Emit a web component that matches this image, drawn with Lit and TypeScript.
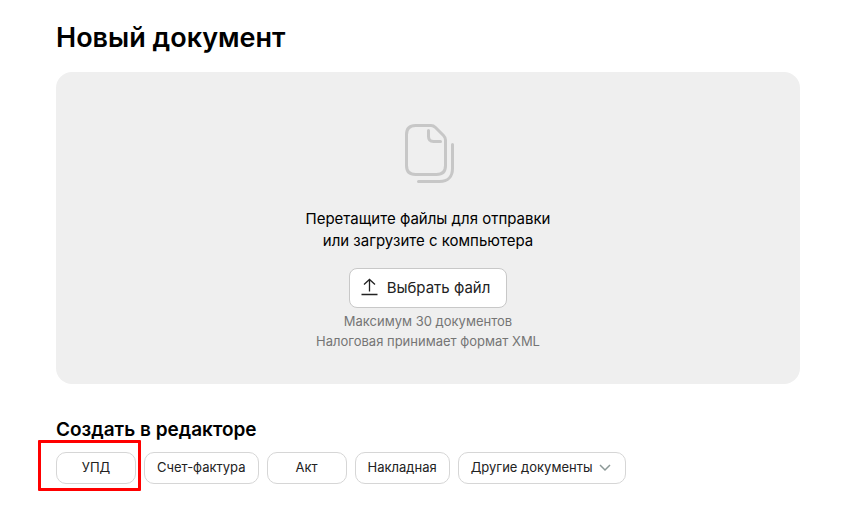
import { LitElement, html, css } from "lit";
import { customElement } from "lit/decorators.js";

@customElement("app-root")
export class AppRoot extends LitElement {
  static styles = css`
    :host {
      display: block;
      box-sizing: border-box;
      min-height: 100vh;
      padding: 20px 65px 28px 56px;
      background: #fff;
      color: #000;
      font-family: Inter, "Liberation Sans", sans-serif;
    }
    h1 {
      margin: 0 0 16px;
      font-size: 27px;
      line-height: 36px;
      font-weight: 600;
    }
    .drop {
      display: flex;
      flex-direction: column;
      align-items: center;
      padding: 52px 24px 33px;
      border-radius: 16px;
      background: #efefef;
      text-align: center;
    }
    .files {
      display: block;
      margin-bottom: 24px;
    }
    p {
      margin: 0;
    }
    .lead {
      font-size: 15px;
      line-height: 22px;
    }
    button {
      box-sizing: border-box;
      display: inline-flex;
      align-items: center;
      justify-content: center;
      border: 1px solid #d6d6d6;
      background: #fff;
      color: #222;
      font-family: inherit;
      white-space: nowrap;
      cursor: pointer;
    }
    .choose {
      gap: 9px;
      height: 40px;
      margin: 16px 0 3px;
      padding: 0 16px 2px 11px;
      border-color: #c8c8c8;
      border-radius: 8px;
      font-size: 15px;
    }
    .hint {
      color: #757575;
      font-size: 13px;
      line-height: 20px;
    }
    h2 {
      margin: 32px 0 8px;
      font-size: 19px;
      line-height: 28px;
      font-weight: 600;
    }
    .chips {
      display: flex;
      flex-wrap: wrap;
      gap: 8px;
    }
    .chip {
      height: 32px;
      min-width: 80px;
      padding: 0 12px 2px;
      gap: 4px;
      border-radius: 10px;
      font-size: 13px;
    }
    .marked {
      position: relative;
      display: flex;
    }
    .marked::after {
      content: "";
      position: absolute;
      inset: -12px -5px -7px -18px;
      border: 3px solid #f00;
      border-radius: 1px;
      pointer-events: none;
    }
  `;

  render() {
    return html`
      <main>
        <h1>Новый документ</h1>
        <section class="drop">
          <svg class="files" width="54" height="60" viewBox="-4 0 54 60" fill="none" stroke="#c7c7c7" stroke-width="3" stroke-linecap="round" stroke-linejoin="round" aria-hidden="true">
            <path d="M10.500 1.500H26Q28.500 1.500 30.500 3.500L38.500 11.500Q40.500 13.500 40.500 16V41.500Q40.500 50.500 31.500 50.500H10.500Q1.500 50.500 1.500 41.500V10.500Q1.500 1.500 10.500 1.500Z" />
            <path d="M23.500 6.500V12.500Q23.500 17.500 28.500 17.500H35.500" />
            <path d="M47.500 20.500V44.500C47.500 52.500 43 57.500 34.500 57.500H13.500" />
          </svg>
          <p class="lead">Перетащите файлы для отправки<br />или загрузите с компьютера</p>
          <button class="choose" type="button">
            <svg width="17" height="18" viewBox="0 0 17 18" fill="none" stroke="#222" stroke-width="1.300" aria-hidden="true">
              <path d="M8.500 13.500V1.500M3 6.500L8.500 1.500L14 6.500M0.500 16.500H16.500" />
            </svg>
            Выбрать файл
          </button>
          <p class="hint">Максимум 30 документов<br />Налоговая принимает формат XML</p>
        </section>
        <h2>Создать в редакторе</h2>
        <div class="chips">
          <div class="marked"><button class="chip" type="button">УПД</button></div>
          <button class="chip" type="button">Счет-фактура</button>
          <button class="chip" type="button">Акт</button>
          <button class="chip" type="button">Накладная</button>
          <button class="chip" type="button" aria-haspopup="menu">
            Другие документы
            <svg width="16" height="16" viewBox="0 0 16 16" fill="none" stroke="#8b9896" stroke-width="1.500" aria-hidden="true">
              <path d="M3 6L8 11L13 6" />
            </svg>
          </button>
        </div>
      </main>
    `;
  }
}
